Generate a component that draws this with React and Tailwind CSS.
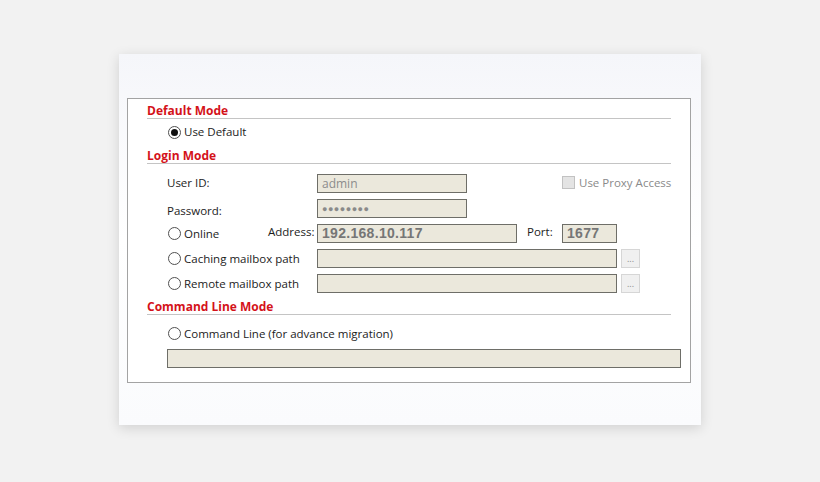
import React from "react";

const font = { fontFamily: '"Open Sans", "Noto Sans", Arial, sans-serif' };

function Radio({ checked }) {
  return (
    <span className="relative inline-flex h-[13px] w-[13px] shrink-0 items-center justify-center rounded-full border border-[#505050] bg-white">
      {checked && <span className="h-[7px] w-[7px] rounded-full bg-[#111]" />}
    </span>
  );
}

function Field({ w, children, className = "" }) {
  return (
    <div
      className={`flex h-[19px] shrink-0 items-center border border-[#6e6e68] bg-[#ebe8dc] pl-[4px] ${className}`}
      style={{ width: w }}
    >
      {children}
    </div>
  );
}

function Header({ children, h }) {
  return (
    <div
      className="mr-[19px] flex items-end border-b border-[#c4c4c4]"
      style={{ height: h }}
    >
      <span className="text-[12px] font-bold leading-[14px] text-[#d4121a]">{children}</span>
    </div>
  );
}

function Browse() {
  return (
    <div className="ml-[4px] flex h-[19px] w-[19px] items-end justify-center border border-[#d6d6d6] bg-[#f0f0f0] pb-[4px] text-[9px] leading-none text-[#8a8a8a]">
      ...
    </div>
  );
}

const mono = { fontFamily: '"Liberation Sans", Arial, sans-serif' };

export default function App() {
  return (
    <div className="h-[482px] w-[820px] bg-[#f2f2f2] pl-[119px] pt-[54px]" style={font}>
      <div className="h-[371px] w-[582px] bg-gradient-to-b from-[#f5f6fa] via-white to-[#fafbfd] pl-[8px] pt-[44px] shadow-[0_3px_12px_rgba(0,0,0,0.14)]">
        <div className="h-[285px] w-[564px] border border-[#a3a3a3] bg-white pl-[19px] text-[11.5px] text-[#1c1c1c]">
          <Header h={20}>Default Mode</Header>
          <div className="flex h-[26px] items-center pl-[21px]">
            <Radio checked />
            <span className="ml-[3px]">Use Default</span>
          </div>
          <Header h={19}>Login Mode</Header>

          <div className="ml-[20px] mt-[10px] flex h-[19px] items-center">
            <span className="w-[150px] shrink-0 -translate-y-[1px]">User ID:</span>
            <Field w={150}>
              <span className="text-[12px] text-[#8c8c8c]">admin</span>
            </Field>
            <span className="ml-[95px] h-[13px] w-[13px] shrink-0 -translate-y-[1px] border border-[#c2c2c2] bg-[#e4e4e4]" />
            <span className="ml-[4px] -translate-y-[1px] text-[#8a8a8a]">Use Proxy Access</span>
          </div>

          <div className="ml-[20px] mt-[6px] flex h-[19px] items-center">
            <span className="w-[150px] shrink-0 pt-[5px]">Password:</span>
            <Field w={150}>
              <span className="text-[9px] tracking-[0.5px] text-[#8a8a8a]">●●●●●●●●</span>
            </Field>
          </div>

          <div className="ml-[20px] mt-[6px] flex h-[19px] items-center">
            <div className="flex w-[101px] shrink-0 items-center pl-[1px]">
              <Radio />
              <span className="ml-[3px]">Online</span>
            </div>
            <span className="w-[49px] shrink-0 -translate-y-[2px]">Address:</span>
            <Field w={200} className="pl-[2px]">
              <span className="text-[14px] font-bold tracking-[0.3px] text-[#767676]" style={mono}>
                192.168.10.117
              </span>
            </Field>
            <span className="ml-[10px] w-[35px] shrink-0 -translate-y-[2px]">Port:</span>
            <Field w={55} className="pl-[2px]">
              <span className="text-[14px] font-bold tracking-[0.3px] text-[#767676]" style={mono}>
                1677
              </span>
            </Field>
          </div>

          <div className="ml-[20px] mt-[6px] flex h-[19px] items-center">
            <div className="flex w-[150px] shrink-0 items-center pl-[1px]">
              <Radio />
              <span className="ml-[3px]">Caching mailbox path</span>
            </div>
            <Field w={300} />
            <Browse />
          </div>

          <div className="ml-[20px] mt-[6px] flex h-[19px] items-center">
            <div className="flex w-[150px] shrink-0 items-center pl-[1px]">
              <Radio />
              <span className="ml-[3px]">Remote mailbox path</span>
            </div>
            <Field w={300} />
            <Browse />
          </div>

          <Header h={22}>Command Line Mode</Header>

          <div className="ml-[20px] mt-[9px] flex h-[19px] items-center pl-[1px]">
            <Radio />
            <span className="ml-[3px]">Command Line (for advance migration)</span>
          </div>

          <div className="ml-[20px] mt-[6px]">
            <Field w={514} />
          </div>
        </div>
      </div>
    </div>
  );
}
